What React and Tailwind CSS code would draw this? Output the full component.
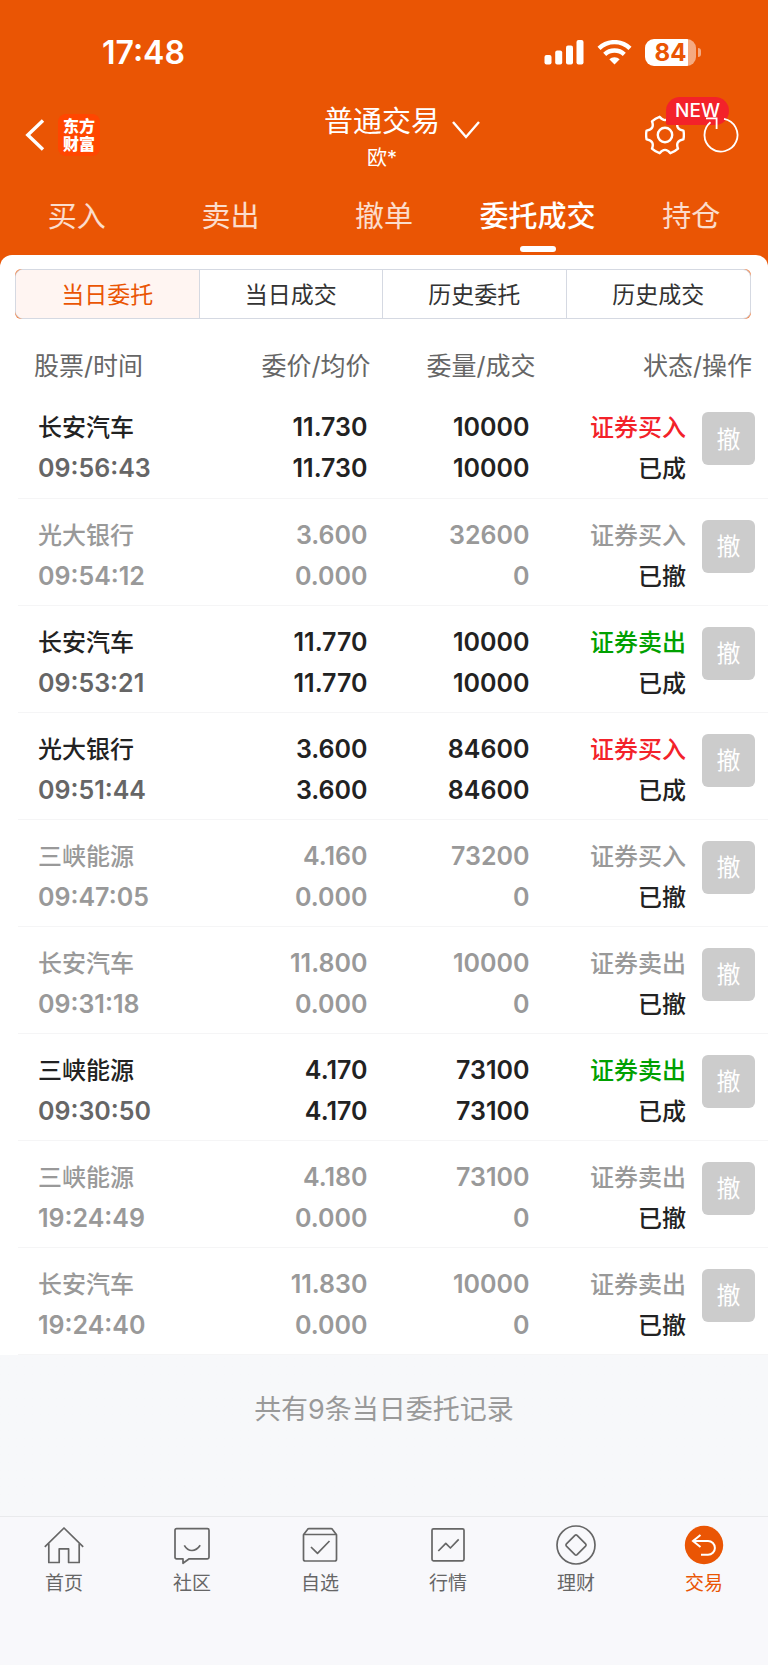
import clsx from "clsx";

const TABS = ["买入", "卖出", "撤单", "委托成交", "持仓"];
const SEGMENTS = ["当日委托", "当日成交", "历史委托", "历史成交"];

const ORDERS = [
  { name: "长安汽车", time: "09:56:43", price: "11.730", avg: "11.730", qty: "10000", filled: "10000", side: "buy" },
  { name: "光大银行", time: "09:54:12", price: "3.600", avg: "0.000", qty: "32600", filled: "0", side: "buy", cancelled: true },
  { name: "长安汽车", time: "09:53:21", price: "11.770", avg: "11.770", qty: "10000", filled: "10000", side: "sell" },
  { name: "光大银行", time: "09:51:44", price: "3.600", avg: "3.600", qty: "84600", filled: "84600", side: "buy" },
  { name: "三峡能源", time: "09:47:05", price: "4.160", avg: "0.000", qty: "73200", filled: "0", side: "buy", cancelled: true },
  { name: "长安汽车", time: "09:31:18", price: "11.800", avg: "0.000", qty: "10000", filled: "0", side: "sell", cancelled: true },
  { name: "三峡能源", time: "09:30:50", price: "4.170", avg: "4.170", qty: "73100", filled: "73100", side: "sell" },
  { name: "三峡能源", time: "19:24:49", price: "4.180", avg: "0.000", qty: "73100", filled: "0", side: "sell", cancelled: true },
  { name: "长安汽车", time: "19:24:40", price: "11.830", avg: "0.000", qty: "10000", filled: "0", side: "sell", cancelled: true },
];

const NAV = [
  { label: "首页", Icon: HomeIcon },
  { label: "社区", Icon: ChatIcon },
  { label: "自选", Icon: BoxIcon },
  { label: "行情", Icon: ChartIcon },
  { label: "理财", Icon: CoinIcon },
  { label: "交易", Icon: TradeIcon, active: true },
];

export default function App() {
  return (
    <div className="flex min-h-screen flex-col bg-[#f7f8fa] font-['Inter','Noto_Sans_CJK_SC',sans-serif] text-[#222]">
      <div className="bg-[#ea5504] text-white">
        <StatusBar />
        <Header />
        <Tabs />
      </div>

      {/* the orange shows behind the rounded corners */}
      <main className="flex-1 bg-linear-to-b from-[#ea5504] from-[20px] to-[#f7f8fa] to-[20px]">
        <div className="rounded-t-xl bg-white">
          <Segments />
          <Orders />
        </div>
        <p className="pt-[34px] pb-8 text-center text-[27px] leading-[42px] text-[#999]">共有9条当日委托记录</p>
      </main>

      <BottomNav />
    </div>
  );
}

function StatusBar() {
  return (
    <div className="flex h-24 items-center justify-between pt-[9px] pr-[67px] pl-[102px]">
      <span className="text-[32px] leading-10 font-semibold">17:48</span>
      <div className="flex items-center gap-[13px]">
        <svg className="h-[25px] w-10" viewBox="0 0 40 25" fill="currentColor">
          <rect x="0.5" y="15" width="7" height="9.5" rx="2" />
          <rect x="11.2" y="10.5" width="7" height="14" rx="2" />
          <rect x="22" y="5.5" width="7" height="19" rx="2" />
          <rect x="32.5" y="0" width="7" height="24.5" rx="2" />
        </svg>
        <svg className="h-[25px] w-[35px]" viewBox="0 0 35 25" fill="none" stroke="currentColor" strokeWidth="4.4">
          <path d="M2 8.3a22.5 22.5 0 0 1 31 0" />
          <path d="M7.7 14.4a14.3 14.3 0 0 1 19.6 0" />
          <path d="M17.5 24.5l-5.2-5.2a7.4 7.4 0 0 1 10.4 0z" fill="currentColor" stroke="none" />
        </svg>
        <div className="flex items-center gap-0.5">
          <span className="flex h-[27px] w-[51px] items-center justify-center overflow-hidden rounded-[9px] bg-linear-to-r from-white from-[84%] to-white/50 to-[84%] text-2xl font-bold text-[#ea5504]">
            84
          </span>
          <span className="h-[9px] w-[3px] rounded-r-full bg-white/50" />
        </div>
      </div>
    </div>
  );
}

function Header() {
  return (
    <header className="grid grid-cols-[1fr_auto_1fr] items-center pr-[29px] pl-[25px]">
      <div className="flex items-center gap-3">
        <button type="button" aria-label="返回">
          <svg className="h-8 w-[21px]" viewBox="0 0 21 32" fill="none" stroke="currentColor" strokeWidth="3.4">
            <path d="M18 1.5L2.8 16 18 30.5" />
          </svg>
        </button>
        <span className="flex size-[42px] flex-col items-center justify-center rounded-lg bg-[#ff4600] text-base leading-[18px] font-black">
          <span>东方</span>
          <span>财富</span>
        </span>
      </div>

      <div className="pt-1.5 text-center">
        <button type="button" className="flex items-center gap-3 pl-10 text-[29px] leading-10">
          普通交易
          <svg className="mt-4 h-[18px] w-7" viewBox="0 0 28 18" fill="none" stroke="currentColor" strokeWidth="2.4">
            <path d="M1 1l13 15L27 1" />
          </svg>
        </button>
        <p className="text-[20px] leading-8">欧*</p>
      </div>

      <div className="relative flex justify-end gap-[18px]">
        <button type="button" aria-label="设置">
          <svg className="size-10" viewBox="-20 -20 40 40" fill="none" stroke="currentColor" strokeWidth="2.4" strokeLinejoin="round">
            <path d="M18.4-4.4Q19.4 0 18.4 4.4Q10 5.8 13 13.7Q9.7 16.8 5.4 18.2Q0 11.6-5.4 18.2Q-9.7 16.8-13 13.7Q-10 5.8-18.4 4.4Q-19.4 0-18.4-4.4Q-10-5.8-13-13.7Q-9.7-16.8-5.4-18.2Q0-11.6 5.4-18.2Q9.7-16.8 13-13.7Q10-5.8 18.4-4.4z" />
            <circle r="7.2" />
          </svg>
        </button>
        <span className="absolute right-[10px] bottom-[30px] flex h-7 w-[63px] items-center justify-center rounded-[14px] rounded-bl-[2px] bg-[#f3222a] text-[19px] font-medium">
          NEW
        </span>
        <button type="button" aria-label="刷新" className="relative">
          <svg className="size-9" viewBox="-18 -18 36 36" fill="none" stroke="currentColor" strokeWidth="1.8">
            <path d="M3-16.2A16.5 16.5 0 1 1-10.5-12.7" />
            <path d="M-15-16.6H-4.4V-6" />
          </svg>
        </button>
      </div>
    </header>
  );
}

function Tabs() {
  return (
    <nav className="grid grid-cols-5 pt-[23px] pb-[3px]">
      {TABS.map((tab) => {
        const active = tab === "委托成交";
        return (
          <button key={tab} type="button" className="flex flex-col items-center gap-[9px]">
            <span className={clsx("text-[29px] leading-10", active ? "font-medium" : "text-white/80")}>{tab}</span>
            <span className={clsx("h-[6px] w-9 rounded-full", active && "bg-white")} />
          </button>
        );
      })}
    </nav>
  );
}

function Segments() {
  return (
    <div className="pt-[14px] pr-[17px] pl-[15px]">
      {/* orange only peeks out at the four corners */}
      <div className="overflow-hidden rounded-md bg-[#ea5504]/70">
        <div className="grid h-[50px] grid-cols-4 divide-x divide-[#d5d9e2] overflow-hidden rounded-lg border border-[#d5d9e2] bg-white">
          {SEGMENTS.map((label, i) => (
            <button
              key={label}
              type="button"
              className={clsx("pt-0.5 text-[23px]", i === 0 ? "bg-[#fff5f2] text-[#ea5504]" : "text-[#333]")}
            >
              {label}
            </button>
          ))}
        </div>
      </div>
    </div>
  );
}

function Orders() {
  return (
    <div className="pl-[18px]">
      <table className="w-full table-fixed border-collapse text-right text-[25px]">
        <colgroup>
          <col className="w-[24%]" />
          <col className="w-[23%]" />
          <col className="w-[22%]" />
          <col />
          <col className="w-[82px]" />
        </colgroup>
        <thead>
          <tr className="h-[72px] align-bottom leading-8 text-[#666] *:pb-[9px] *:font-normal">
            <th className="pl-4 text-left">股票/时间</th>
            <th>委价/均价</th>
            <th>委量/成交</th>
            <th colSpan={2} className="pr-4">状态/操作</th>
          </tr>
        </thead>
        <tbody>
          {ORDERS.map((order) => (
            <OrderRow key={order.time} order={order} />
          ))}
        </tbody>
      </table>
    </div>
  );
}

function OrderRow({ order }) {
  const { cancelled } = order;
  const buy = order.side === "buy";
  const muted = cancelled && "text-[#999]";

  return (
    <tr className="h-[107px] border-b border-[#f5f5f6] align-top leading-[41px] font-semibold *:pt-4">
      <td className={clsx("pl-5 text-left", muted)}>
        <div className="text-2xl leading-[41px] font-medium">{order.name}</div>
        <div className={cancelled ? "text-[#999]" : "text-[#666]"}>{order.time}</div>
      </td>
      <td className={clsx("pr-[3px]", muted)}>
        <div>{order.price}</div>
        <div>{order.avg}</div>
      </td>
      <td className={clsx("pr-1.5", muted)}>
        <div>{order.qty}</div>
        <div>{order.filled}</div>
      </td>
      <td className="text-2xl leading-[41px] font-medium">
        <div className={muted || (buy ? "text-[#f3222a]" : "text-[#00a000]")}>{buy ? "证券买入" : "证券卖出"}</div>
        <div>{cancelled ? "已撤" : "已成"}</div>
      </td>
      <td className="pr-[13px]">
        <button type="button" disabled className="mt-[5px] size-[53px] rounded-md bg-[#ccc] pt-0.5 text-center text-2xl font-normal text-white">
          撤
        </button>
      </td>
    </tr>
  );
}

function BottomNav() {
  return (
    <nav className="grid h-[149px] grid-cols-6 items-start border-t border-[#e9eaec] bg-[#f8f8fb] pt-2">
      {NAV.map(({ label, Icon, active }) => (
        <a
          key={label}
          href="#"
          className={clsx("flex flex-col items-center gap-[5px] text-[19px] leading-7", active ? "text-[#ea5504]" : "text-[#666]")}
        >
          <Icon />
          {label}
        </a>
      ))}
    </nav>
  );
}

/* --- bottom bar icons --- */
function NavIcon({ children }) {
  return (
    <svg className="size-10" viewBox="0 0 40 40" fill="none" stroke="currentColor" strokeWidth="1.7" strokeLinejoin="round">
      {children}
    </svg>
  );
}

function HomeIcon() {
  return (
    <NavIcon>
      <path d="M0.8 21.8L20 3l19.2 18.8" />
      <path d="M4.8 18.5v19h10.4V23.8h9.4v13.7h10.6v-19" />
    </NavIcon>
  );
}

function ChatIcon() {
  return (
    <NavIcon>
      <path d="M4.6 3.6h30.8q1.6 0 1.6 1.6v27q0 1.6-1.6 1.6H17.2L11 38.3v-4.5H4.6Q3 33.8 3 32.2v-27q0-1.6 1.6-1.6z" />
      <path d="M12.3 20.3q3 5.2 7.7 5.2t8.2-5.2" />
    </NavIcon>
  );
}

function BoxIcon() {
  return (
    <NavIcon>
      <path d="M3.5 9.8v24.4q0 1.8 1.8 1.8h29.4q1.8 0 1.8-1.8V9.8l-4-5.4q-.5-.8-1.5-.8H9q-1 0-1.5.8z" />
      <path d="M3.5 9.5h33" />
      <path d="M11 22l6.5 6.3L29.5 16" />
    </NavIcon>
  );
}

function ChartIcon() {
  return (
    <NavIcon>
      <rect x="4" y="3.8" width="32" height="32" rx="1.5" />
      <path d="M10.3 26l7.5-7.6 4.6 4.6 8.3-8.6" />
    </NavIcon>
  );
}

function CoinIcon() {
  return (
    <NavIcon>
      <circle cx="20" cy="20" r="19" />
      <path d="M18.9 10.4q1.1-1 2.2 0l8.5 8.5q1 1.1 0 2.2l-8.5 8.5q-1.1 1-2.2 0l-8.5-8.5q-1-1.1 0-2.2z" />
    </NavIcon>
  );
}

function TradeIcon() {
  return (
    <NavIcon>
      <circle cx="20" cy="20" r="19.2" fill="currentColor" stroke="none" />
      <path d="M16.5 10L9 16l7.5 6M9 16h15a6.8 6.8 0 0 1 0 13.8h-7" stroke="white" strokeWidth="2" strokeLinejoin="miter" />
    </NavIcon>
  );
}
